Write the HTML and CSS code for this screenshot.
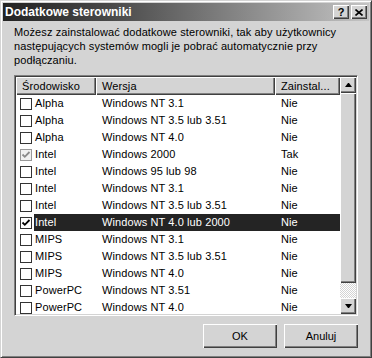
FILE: index.html
```html
<!DOCTYPE html>
<html lang="pl">

<head>
    <meta charset="UTF-8">
    <title>Dodatkowe sterowniki</title>
    <link rel="stylesheet" href="styles.css">
</head>

<body>
    <div class="window">
        <div class="titlebar">
            <span class="title">Dodatkowe sterowniki</span>
            <div class="caption-buttons">
                <button class="cap-btn help">?</button>
                <button class="cap-btn close">
                    <svg width="8" height="7" viewBox="0 0 8 7">
                        <path d="M0.5 0.5 L7.5 6.5 M7.5 0.5 L0.5 6.5" stroke="#000" stroke-width="1.6" fill="none" />
                    </svg>
                </button>
            </div>
        </div>
        <div class="content">
            <p class="intro">Możesz zainstalować dodatkowe sterowniki, tak aby użytkownicy<br>następujących systemów mogli je pobrać automatycznie przy<br>podłączaniu.</p>
            <div class="listbox">
                <div class="list">
                    <div class="list-header">
                        <div class="hcell">Środowisko</div>
                        <div class="hcell">Wersja</div>
                        <div class="hcell">Zainstal...</div>
                    </div>
                    <div class="row">
                        <div class="cell env"><span class="check"></span><span class="label">Alpha</span></div>
                        <div class="cell">Windows NT 3.1</div>
                        <div class="cell">Nie</div>
                    </div>
                    <div class="row">
                        <div class="cell env"><span class="check"></span><span class="label">Alpha</span></div>
                        <div class="cell">Windows NT 3.5 lub 3.51</div>
                        <div class="cell">Nie</div>
                    </div>
                    <div class="row">
                        <div class="cell env"><span class="check"></span><span class="label">Alpha</span></div>
                        <div class="cell">Windows NT 4.0</div>
                        <div class="cell">Nie</div>
                    </div>
                    <div class="row">
                        <div class="cell env"><span class="check checked disabled"><svg width="10" height="10" viewBox="0 0 10 10"><path d="M1.5 4.5 L3.8 6.8 L8.5 2" stroke="#8a8a8a" stroke-width="1.8" fill="none" /></svg></span><span class="label">Intel</span></div>
                        <div class="cell">Windows 2000</div>
                        <div class="cell">Tak</div>
                    </div>
                    <div class="row">
                        <div class="cell env"><span class="check"></span><span class="label">Intel</span></div>
                        <div class="cell">Windows 95 lub 98</div>
                        <div class="cell">Nie</div>
                    </div>
                    <div class="row">
                        <div class="cell env"><span class="check"></span><span class="label">Intel</span></div>
                        <div class="cell">Windows NT 3.1</div>
                        <div class="cell">Nie</div>
                    </div>
                    <div class="row">
                        <div class="cell env"><span class="check"></span><span class="label">Intel</span></div>
                        <div class="cell">Windows NT 3.5 lub 3.51</div>
                        <div class="cell">Nie</div>
                    </div>
                    <div class="row selected">
                        <div class="cell env"><span class="check checked"><svg width="10" height="10" viewBox="0 0 10 10"><path d="M1.5 4.5 L3.8 6.8 L8.5 2" stroke="#000" stroke-width="1.8" fill="none" /></svg></span><span class="label">Intel</span></div>
                        <div class="cell">Windows NT 4.0 lub 2000</div>
                        <div class="cell">Nie</div>
                    </div>
                    <div class="row">
                        <div class="cell env"><span class="check"></span><span class="label">MIPS</span></div>
                        <div class="cell">Windows NT 3.1</div>
                        <div class="cell">Nie</div>
                    </div>
                    <div class="row">
                        <div class="cell env"><span class="check"></span><span class="label">MIPS</span></div>
                        <div class="cell">Windows NT 3.5 lub 3.51</div>
                        <div class="cell">Nie</div>
                    </div>
                    <div class="row">
                        <div class="cell env"><span class="check"></span><span class="label">MIPS</span></div>
                        <div class="cell">Windows NT 4.0</div>
                        <div class="cell">Nie</div>
                    </div>
                    <div class="row">
                        <div class="cell env"><span class="check"></span><span class="label">PowerPC</span></div>
                        <div class="cell">Windows NT 3.51</div>
                        <div class="cell">Nie</div>
                    </div>
                    <div class="row">
                        <div class="cell env"><span class="check"></span><span class="label">PowerPC</span></div>
                        <div class="cell">Windows NT 4.0</div>
                        <div class="cell">Nie</div>
                    </div>
                </div>
                <div class="scrollbar">
                    <div class="sb-btn"><span class="arrow up"></span></div>
                    <div class="sb-thumb"></div>
                    <div class="sb-track"></div>
                    <div class="sb-btn"><span class="arrow down"></span></div>
                </div>
            </div>
            <div class="actions">
                <button class="btn">OK</button>
                <button class="btn">Anuluj</button>
            </div>
        </div>
    </div>
</body>

</html>
```

FILE: styles.css
```css
body {
    margin: 0;
    font-family: "Liberation Sans", Arial, sans-serif;
    font-size: 11px;
    letter-spacing: 0.1px;
    color: #000;
    background-color: #d4d4d4;
}

.window {
    width: 372px;
    height: 358px;
    box-sizing: border-box;
    padding: 2px;
    background-color: #d4d4d4;
    border: 1px solid;
    border-color: #d4d4d4 #404040 #404040 #d4d4d4;
    box-shadow: inset 1px 1px #fff, inset -1px -1px #808080;
    display: flex;
    flex-direction: column;
}

.titlebar {
    height: 18px;
    padding: 0 2px;
    display: flex;
    align-items: center;
    justify-content: space-between;
    background: linear-gradient(to right, #222 0%, #4a4a4a 30%, #c4c4c4 100%);
}

.title {
    color: #fff;
    font-weight: bold;
    font-size: 12px;
    letter-spacing: 0;
}

.caption-buttons {
    display: flex;
    gap: 2px;
}

.cap-btn {
    width: 16px;
    height: 14px;
    padding: 0;
    border: none;
    background-color: #d4d4d4;
    box-shadow: inset 1px 1px #fff, inset -1px -1px #404040, inset -2px -2px #808080;
    display: flex;
    align-items: center;
    justify-content: center;
    font-family: "Liberation Sans", Arial, sans-serif;
    font-weight: bold;
    font-size: 11px;
    line-height: 14px;
    color: #000;
}

.content {
    flex: 1;
    padding: 4px 11px 0;
}

.intro {
    margin: 0;
    line-height: 14px;
}

.listbox {
    margin-top: 8px;
    height: 241px;
    box-sizing: border-box;
    padding: 1px;
    background-color: #fff;
    border: 1px solid;
    border-color: #808080 #fff #fff #808080;
    box-shadow: inset 1px 1px #404040, inset -1px -1px #d4d4d4;
    display: flex;
}

.list {
    flex: 1;
    overflow: hidden;
}

.list-header,
.row {
    display: grid;
    grid-template-columns: 80px 179px 65px;
}

.hcell {
    height: 18px;
    line-height: 18px;
    padding-left: 6px;
    background-color: #d4d4d4;
    box-shadow: inset 1px 1px #fff, inset -1px -1px #404040, inset -2px -2px #808080;
    white-space: nowrap;
    overflow: hidden;
}

.row {
    height: 17px;
    line-height: 17px;
}

.cell {
    padding-left: 6px;
    white-space: nowrap;
    overflow: hidden;
}

.cell.env {
    padding-left: 4px;
    display: flex;
    align-items: center;
}

.check {
    width: 12px;
    height: 12px;
    box-sizing: border-box;
    border: 1px solid #333;
    background-color: #fff;
    margin-right: 2px;
    flex-shrink: 0;
    display: flex;
    align-items: center;
    justify-content: center;
}

.check.disabled {
    border-color: #999;
    background-color: #f0f0f0;
}

.label {
    flex: 1;
    padding-left: 1px;
    height: 17px;
}

.row.selected .label,
.row.selected .cell:not(.env) {
    background-color: #242424;
    color: #fff;
}

.scrollbar {
    width: 16px;
    display: flex;
    flex-direction: column;
}

.sb-btn {
    height: 16px;
    background-color: #d4d4d4;
    box-shadow: inset 1px 1px #fff, inset -1px -1px #404040, inset -2px -2px #808080;
    display: flex;
    align-items: center;
    justify-content: center;
}

.sb-thumb {
    height: 190px;
    background-color: #d4d4d4;
    box-shadow: inset 1px 1px #fff, inset -1px -1px #404040, inset -2px -2px #808080;
}

.sb-track {
    flex: 1;
    background: repeating-conic-gradient(#d4d4d4 0 25%, #fff 0 50%) 0 0 / 2px 2px;
}

.arrow {
    width: 1px;
    height: 0;
    border-left: 3px solid transparent;
    border-right: 3px solid transparent;
}

.arrow.up {
    border-bottom: 4px solid #000;
}

.arrow.down {
    border-top: 4px solid #000;
}

.actions {
    margin-top: 8px;
    display: flex;
    justify-content: flex-end;
    gap: 7px;
}

.btn {
    width: 74px;
    height: 24px;
    padding: 0;
    border: none;
    background-color: #d4d4d4;
    box-shadow: inset 1px 1px #fff, inset -1px -1px #404040, inset -2px -2px #808080;
    font-family: "Liberation Sans", Arial, sans-serif;
    font-size: 11px;
    color: #000;
}
```
